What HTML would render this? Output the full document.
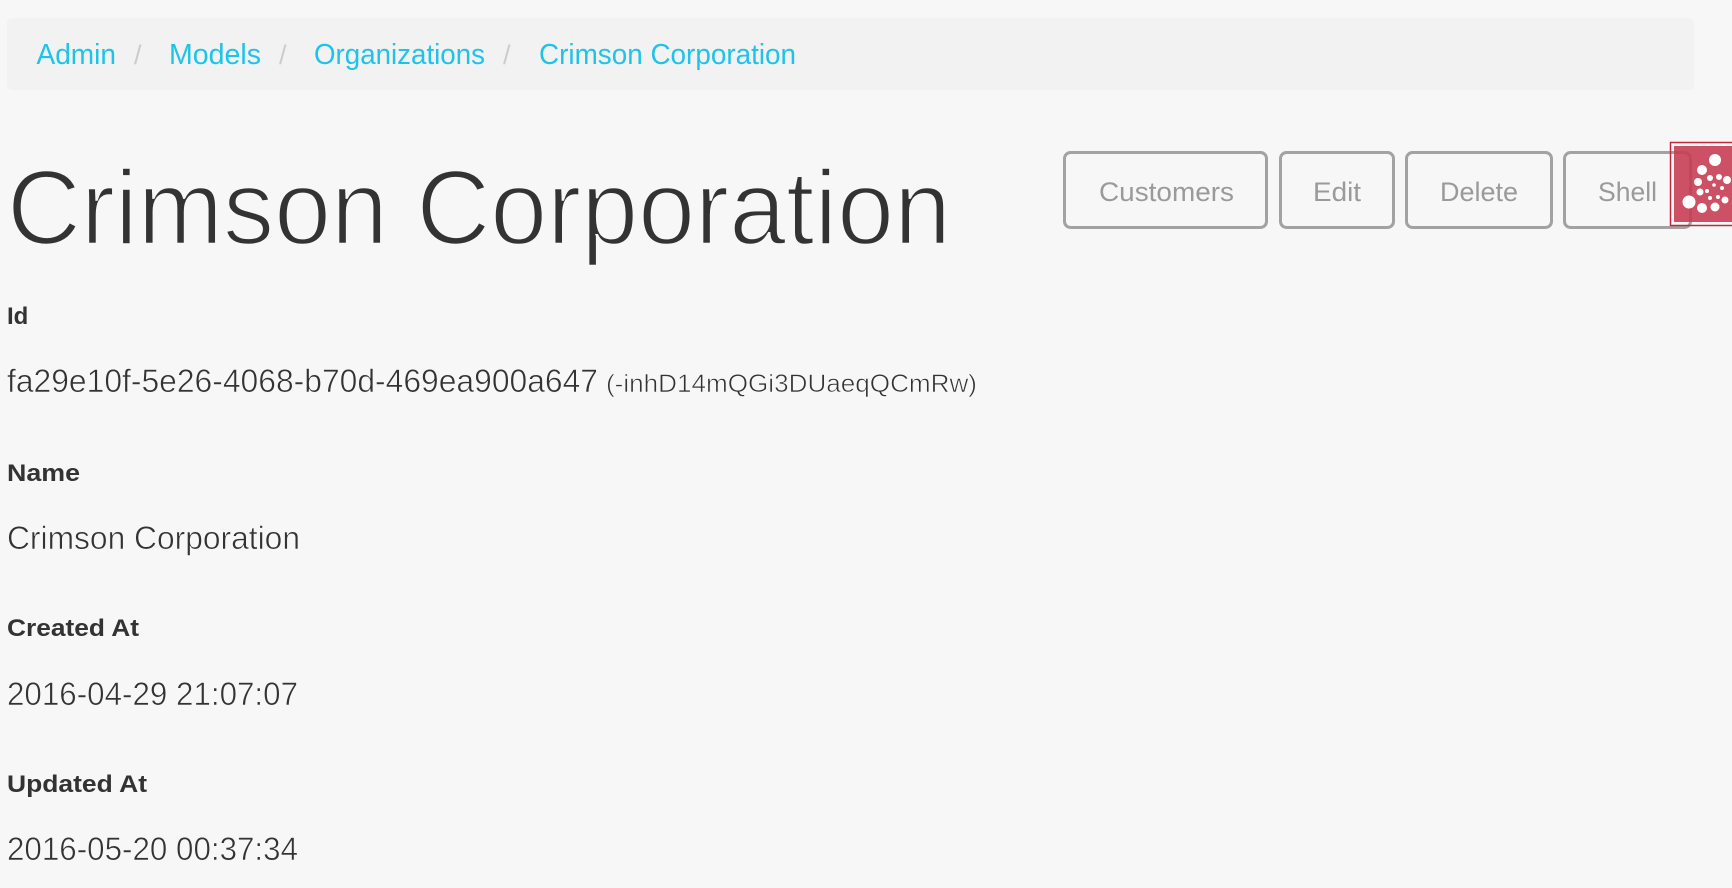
<!DOCTYPE html>
<html><head><meta charset="utf-8"><style>
html,body{margin:0;padding:0;background:#f7f7f7;width:1732px;height:888px;overflow:hidden}
svg{position:absolute;left:0;top:0}
</style></head><body>
<svg width="1732" height="888" xmlns="http://www.w3.org/2000/svg" font-family="Liberation Sans, sans-serif">
<rect x="7" y="18" width="1687" height="72" rx="5" fill="#f2f2f2"/>
<g font-size="29" fill="#1fc3ea">
<text x="36.5" y="64" textLength="79.5" lengthAdjust="spacingAndGlyphs">Admin</text>
<text x="169" y="64" textLength="92" lengthAdjust="spacingAndGlyphs">Models</text>
<text x="314" y="64" textLength="171" lengthAdjust="spacingAndGlyphs">Organizations</text>
<text x="539" y="64" textLength="257" lengthAdjust="spacingAndGlyphs">Crimson Corporation</text>
</g>
<g font-size="27" fill="#cccccc">
<text x="134" y="64">/</text><text x="279" y="64">/</text><text x="503" y="64">/</text>
</g>
<text x="7" y="244" font-size="106" fill="#333" stroke="#f7f7f7" stroke-width="2.5" textLength="944" lengthAdjust="spacingAndGlyphs">Crimson Corporation</text>
<g fill="none" stroke="#a2a2a2" stroke-width="3">
<rect x="1064.5" y="152.5" width="202" height="75" rx="6"/>
<rect x="1280.5" y="152.5" width="113" height="75" rx="6"/>
<rect x="1406.5" y="152.5" width="145" height="75" rx="6"/>
<rect x="1564.5" y="152.5" width="126" height="75" rx="6"/>
</g>
<g font-size="27" fill="#9a9a9a">
<text x="1099" y="201" textLength="135" lengthAdjust="spacingAndGlyphs">Customers</text>
<text x="1313" y="201" textLength="48" lengthAdjust="spacingAndGlyphs">Edit</text>
<text x="1440" y="201" textLength="78" lengthAdjust="spacingAndGlyphs">Delete</text>
<text x="1598" y="201" textLength="59" lengthAdjust="spacingAndGlyphs">Shell</text>
</g>
<rect x="1670.5" y="142.5" width="70" height="83" fill="none" stroke="#c0283c" stroke-width="1.5"/>
<rect x="1674" y="146" width="64" height="76" fill="#c63a50" fill-opacity="0.88"/>
<g fill="#fff">
<circle cx="1715" cy="160" r="6"/><circle cx="1702" cy="170" r="5"/><circle cx="1698" cy="182" r="4"/>
<circle cx="1710" cy="178" r="3"/><circle cx="1719" cy="177" r="3"/><circle cx="1727" cy="180" r="4"/>
<circle cx="1700" cy="192" r="3.5"/><circle cx="1689" cy="202" r="6.5"/><circle cx="1702" cy="208" r="5"/>
<circle cx="1715" cy="207" r="4.5"/><circle cx="1725" cy="200" r="3.5"/><circle cx="1707" cy="191" r="2"/>
<circle cx="1710" cy="198" r="2"/><circle cx="1718" cy="197" r="2"/><circle cx="1722" cy="188" r="2"/>
<circle cx="1714" cy="185" r="1.8"/>
</g>
<g font-size="24" font-weight="bold" fill="#333">
<text x="7" y="324">Id</text>
<text x="7" y="481" textLength="73" lengthAdjust="spacingAndGlyphs">Name</text>
<text x="7" y="636" textLength="132" lengthAdjust="spacingAndGlyphs">Created At</text>
<text x="7" y="792" textLength="140" lengthAdjust="spacingAndGlyphs">Updated At</text>
</g>
<g font-size="32" fill="#333" stroke="#f7f7f7" stroke-width="0.6">
<text x="7" y="392" textLength="591" lengthAdjust="spacingAndGlyphs">fa29e10f-5e26-4068-b70d-469ea900a647</text>
<text x="606" y="392" font-size="25" textLength="371" lengthAdjust="spacingAndGlyphs">(-inhD14mQGi3DUaeqQCmRw)</text>
<text x="7" y="549" textLength="293" lengthAdjust="spacingAndGlyphs">Crimson Corporation</text>
<text x="7" y="705" textLength="291" lengthAdjust="spacingAndGlyphs">2016-04-29 21:07:07</text>
<text x="7" y="860" textLength="291" lengthAdjust="spacingAndGlyphs">2016-05-20 00:37:34</text>
</g>
</svg>
</body></html>
